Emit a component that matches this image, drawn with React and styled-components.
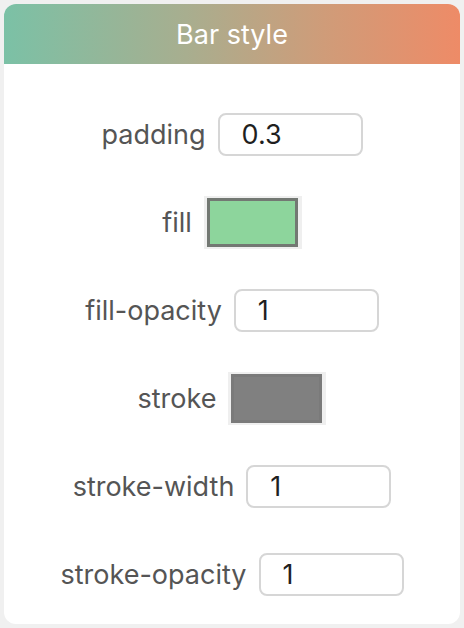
import React from "react";
import styled, { createGlobalStyle } from "styled-components";

const Global = createGlobalStyle`
  html, body { margin: 0; padding: 0; background: #f0f0f0; }
  body { padding: 4px; font-family: Inter, "Helvetica Neue", Arial, sans-serif; }
  * { box-sizing: border-box; }
`;

const Card = styled.div`
  width: 456px;
  height: 620px;
  background: #ffffff;
  border-radius: 12px;
  overflow: hidden;
  display: flex;
  flex-direction: column;
`;

const Header = styled.div`
  height: 60px;
  flex: none;
  display: flex;
  align-items: center;
  justify-content: center;
  background: linear-gradient(90deg, #7bc1a6 0%, #a8ae8f 40%, #cf9c79 70%, #ee8b67 100%);
  color: #ffffff;
  font-size: 27px;
  font-weight: 400;
`;

const Body = styled.div`
  padding: 26px 0 6px;
  display: flex;
  flex-direction: column;
`;

const Row = styled.div`
  height: 88px;
  display: flex;
  align-items: center;
  justify-content: center;
  gap: 12px;
`;

const Label = styled.span`
  font-size: 27px;
  color: #555555;
`;

const Field = styled.div`
  width: 145px;
  height: 43px;
  border: 2px solid #d6d6d6;
  border-radius: 8px;
  padding-left: 22px;
  display: flex;
  align-items: center;
  font-size: 27px;
  color: #1f1f1f;
`;

const Swatch = styled.div`
  width: 98px;
  height: 53px;
  background: #efefef;
  padding: 2px 4px 2px 3px;
  display: flex;
`;

const SwatchColor = styled.div`
  flex: 1;
  border: 3px solid ${(p) => p.$border};
  background: ${(p) => p.$color};
`;

const rows = [
  { label: "padding", value: "0.3" },
  { label: "fill", color: "#8dd59c", border: "#737873" },
  { label: "fill-opacity", value: "1" },
  { label: "stroke", color: "#808080", border: "#7a7a7a" },
  { label: "stroke-width", value: "1" },
  { label: "stroke-opacity", value: "1" },
];

export default function App() {
  return (
    <>
      <Global />
      <Card>
        <Header>Bar style</Header>
        <Body>
          {rows.map((r) => (
            <Row key={r.label}>
              <Label>{r.label}</Label>
              {r.color ? (
                <Swatch>
                  <SwatchColor $color={r.color} $border={r.border} />
                </Swatch>
              ) : (
                <Field>{r.value}</Field>
              )}
            </Row>
          ))}
        </Body>
      </Card>
    </>
  );
}
